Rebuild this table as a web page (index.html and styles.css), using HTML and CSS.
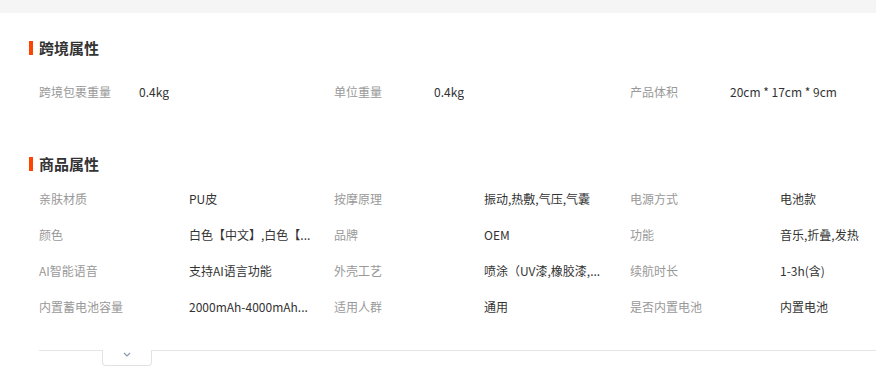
FILE: index.html
```html
<!DOCTYPE html>
<html lang="zh-CN">
<head>
  <meta charset="UTF-8">
  <title>商品属性</title>
  <link rel="stylesheet" href="styles.css">
</head>
<body>

  <div class="top-band"></div>

  <div class="attr-section cross">
    <h3 class="attr-title">跨境属性</h3>
    <div class="attr-grid">
      <div class="attr-item"><span class="attr-name">跨境包裹重量</span><span class="attr-value">0.4kg</span></div>
      <div class="attr-item"><span class="attr-name">单位重量</span><span class="attr-value">0.4kg</span></div>
      <div class="attr-item"><span class="attr-name">产品体积</span><span class="attr-value">20cm * 17cm * 9cm</span></div>
    </div>
  </div>

  <div class="attr-section goods">
    <h3 class="attr-title">商品属性</h3>
    <div class="attr-grid">
      <div class="attr-item"><span class="attr-name">亲肤材质</span><span class="attr-value">PU皮</span></div>
      <div class="attr-item"><span class="attr-name">按摩原理</span><span class="attr-value">振动,热敷,气压,气囊</span></div>
      <div class="attr-item"><span class="attr-name">电源方式</span><span class="attr-value">电池款</span></div>

      <div class="attr-item"><span class="attr-name">颜色</span><span class="attr-value" title="白色【中文】,白色【英文】,粉色【中文】">白色【中文】,白色【...</span></div>
      <div class="attr-item"><span class="attr-name">品牌</span><span class="attr-value">OEM</span></div>
      <div class="attr-item"><span class="attr-name">功能</span><span class="attr-value">音乐,折叠,发热</span></div>

      <div class="attr-item"><span class="attr-name">AI智能语音</span><span class="attr-value">支持AI语言功能</span></div>
      <div class="attr-item"><span class="attr-name">外壳工艺</span><span class="attr-value" title="喷涂（UV漆,橡胶漆,金属漆）">喷涂（UV漆,橡胶漆,...</span></div>
      <div class="attr-item"><span class="attr-name">续航时长</span><span class="attr-value">1-3h(含)</span></div>

      <div class="attr-item"><span class="attr-name">内置蓄电池容量</span><span class="attr-value" title="2000mAh-4000mAh(含)">2000mAh-4000mAh...</span></div>
      <div class="attr-item"><span class="attr-name">适用人群</span><span class="attr-value">通用</span></div>
      <div class="attr-item"><span class="attr-name">是否内置电池</span><span class="attr-value">内置电池</span></div>
    </div>
  </div>

  <div class="attr-footer">
    <div class="expand-tab">
      <svg width="8" height="5" viewBox="0 0 8 5"><path d="M1 1 L4 4 L7 1" fill="none" stroke="#8c9ab0" stroke-width="1.2"/></svg>
    </div>
  </div>

</body>
</html>
```

FILE: styles.css
```css
body { margin: 0; background: #fff; font-family: "Microsoft YaHei", "Noto Sans CJK SC", sans-serif; color: #333; }
.top-band { height: 13px; background: #f5f5f5; }

.attr-section { padding-left: 29px; }
.cross { padding-top: 25px; }
.goods { padding-top: 44px; }

.attr-title { margin: 0; height: 20px; line-height: 20px; font-size: 15px; font-weight: bold; color: #333; display: flex; align-items: center; }
.attr-title::before { content: ""; width: 4px; height: 14px; background: #ff4400; margin-right: 6px; }

/* third column takes what is left of the row */
.attr-grid { display: grid; grid-template-columns: 295px 296px minmax(0, 1fr); padding-left: 10px; }
.cross .attr-grid { margin-top: 16px; }
.goods .attr-grid { margin-top: 7px; }

.attr-item { display: flex; min-width: 0; height: 36px; line-height: 36px; font-size: 12px; }
.attr-name { color: #999; flex: none; }
.attr-value { color: #333; flex: 0 1 auto; min-width: 0; white-space: nowrap; overflow: hidden; }

.cross .attr-name { width: 100px; }
.goods .attr-name { width: 150px; }
.goods .attr-value { max-width: 125px; }

.attr-footer { margin: 25px 0 0 39px; border-top: 1px solid #e5e5e5; padding-left: 63px; }
.expand-tab { width: 50px; height: 16px; margin-top: -1px; background: #fff; border: 1px solid #e2e2e2; border-top: none; border-radius: 0 0 4px 4px; display: flex; justify-content: center; padding-top: 2px; box-sizing: border-box; }
.expand-tab svg { display: block; }
```
